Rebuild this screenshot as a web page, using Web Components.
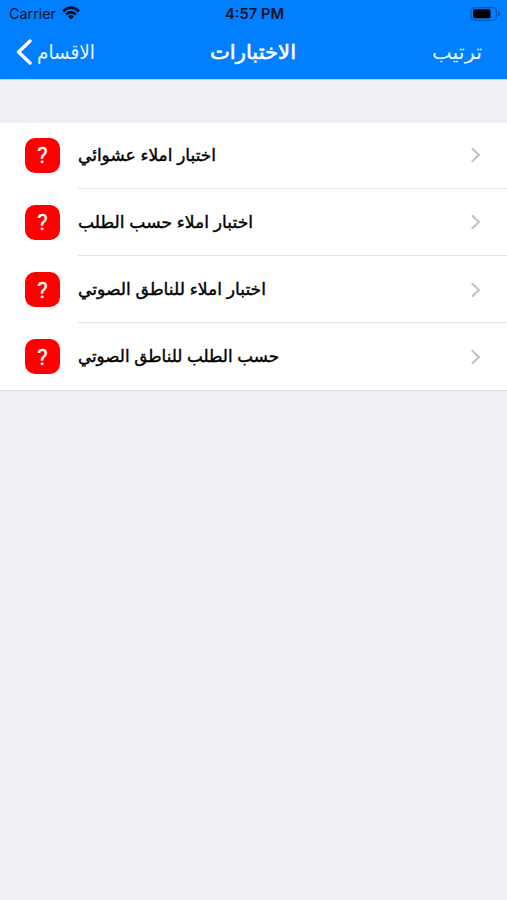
<!DOCTYPE html>
<html lang="ar"><head><meta charset="utf-8"><title>الاختبارات</title>
<style>html,body{margin:0;background:#f0eff4}body{font-family:Inter,"DejaVu Sans",sans-serif}</style></head>
<body><quiz-screen></quiz-screen>
<script>
const define = (name, html, setup) => customElements.define(name, class extends HTMLElement {
  connectedCallback() {
    if (this.shadowRoot) return;
    const t = document.createElement('template');
    t.innerHTML = html;
    this.attachShadow({mode: 'open'}).append(t.content.cloneNode(true));
    if (setup) setup(this);
  }
});

// Label scaled horizontally to a fixed width
define('fit-label', `<style>:host{display:block;white-space:nowrap;line-height:1.2;flex:none}
span{display:inline-block;transform-origin:0 50%}</style><span><slot></slot></span>`, el => {
  const w = +el.getAttribute('width'), s = el.shadowRoot.querySelector('span');
  el.style.width = w + 'px';
  s.style.transform = `scaleX(${w / s.getBoundingClientRect().width})`;
});

define('status-bar', `<style>
:host{display:grid;grid-template-columns:1fr auto 1fr;align-items:center;height:27px;padding:0 7px 0 9px;color:#001126;font-size:14px}
.left{display:flex;align-items:center;gap:6px}fit-label{padding-top:1px}.time{font-weight:600}svg{display:block}.bat{justify-self:end}
</style>
<div class="left"><fit-label width="47">Carrier</fit-label>
<svg width="18" height="14" viewBox="0 0 18 14" fill="none" stroke="#001126" stroke-width="2.7"><path d="M1.1 5.4Q9-2 16.9 5.4M4 8.6Q9 3.9 14 8.6"/><path d="M6 10.4Q9 7.6 12 10.4L9 13.5Z" fill="#001126" stroke="none"/></svg></div>
<fit-label class="time" width="59">4:57 PM</fit-label>
<svg class="bat" width="30" height="14" viewBox="0 0 30 14"><rect x="1" y=".6" width="25.5" height="12.6" rx="3.6" fill="none" stroke="#0056b0" stroke-width="1.1"/><rect x="3" y="2.3" width="17.5" height="9" rx="1.6" fill="#000"/><path d="M28 4.7Q30 5.2 30 7T28 9.2Z" fill="#0056b0"/></svg>`);

define('nav-bar', `<style>
:host{display:grid;grid-template-columns:1fr auto 1fr;align-items:center;height:50px;padding:0 25px 0 24px;color:#fff;font-size:20px}
.back{display:flex;align-items:center;gap:5px;color:#e8f5ff;margin-left:-8px}.title{font-size:20px;-webkit-text-stroke:.6px}.action{justify-self:end;color:#e8f5ff}
svg{display:block;flex:none}
</style>
<div class="back"><svg width="16" height="26" viewBox="0 0 16 26" fill="none" stroke="#fff" stroke-width="3.4" stroke-linecap="round" stroke-linejoin="round"><path d="M14 2L2.5 13L14 24"/></svg><fit-label width="58">الاقسام</fit-label></div>
<fit-label class="title" width="86">الاختبارات</fit-label>
<fit-label class="action" width="50">ترتيب</fit-label>`);

define('quiz-row', `<style>
:host{display:flex;height:67.1px;padding-left:25px}
.icon{width:35px;height:35px;align-self:center;flex:none;margin:0 18px 0 0}
.body{flex:1;display:flex;align-items:center;justify-content:space-between;padding:1px 26px 0 0;box-sizing:border-box;border-bottom:1px solid #e4e4e6;color:#000;font-size:17px;-webkit-text-stroke:.4px}
:host(:last-of-type) .body{border-color:transparent}
.tile{height:100%;border-radius:10px;background:#f00;color:#fff;display:flex;align-items:center;justify-content:center;font:400 22px/1 Roboto,sans-serif;-webkit-text-stroke:.35px;padding-top:2px;box-sizing:border-box}
</style>
<div class="icon"><div class="tile">?</div></div>
<div class="body"><slot></slot><svg width="11" height="16" viewBox="0 0 11 16" fill="none" stroke="#c4c4c7" stroke-width="2.2"><path d="M1.8 1.2L8.9 8L1.8 14.8"/></svg></div>`);

define('quiz-screen', `<style>
:host{display:block;height:900px;background:#f0eff4}
header{height:79px;background:#007fff;border-bottom:1px solid #b5d4f5}
main{margin-top:43px;background:#fff;border-bottom:1px solid #dddde1;height:267px;overflow:hidden}
quiz-row:first-child{margin-top:-1.2px}
</style>
<header><status-bar></status-bar><nav-bar></nav-bar></header>
<main>
<quiz-row><fit-label width="138">اختبار املاء عشوائي</fit-label></quiz-row>
<quiz-row><fit-label width="175">اختبار املاء حسب الطلب</fit-label></quiz-row>
<quiz-row><fit-label width="188">اختبار املاء للناطق الصوتي</fit-label></quiz-row>
<quiz-row><fit-label width="201">حسب الطلب للناطق الصوتي</fit-label></quiz-row>
</main>`);
</script></body></html>
